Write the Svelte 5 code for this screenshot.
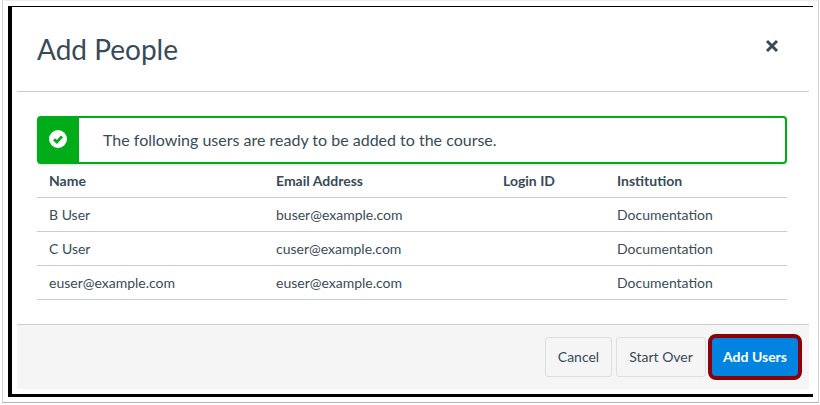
<script>
  const people = [
    { name: 'B User', email: 'buser@example.com', login: '', institution: 'Documentation' },
    { name: 'C User', email: 'cuser@example.com', login: '', institution: 'Documentation' },
    { name: 'euser@example.com', email: 'euser@example.com', login: '', institution: 'Documentation' }
  ];
</script>

<div class="shot">
  <div class="frame">
    <div class="modal">
      <header class="head">
        <h1>Add People</h1>
        <button class="close" aria-label="Close">
          <svg width="14" height="14" viewBox="0 0 14 14"><path d="M2 2 L12 12 M12 2 L2 12" stroke="#394b58" stroke-width="3" fill="none"/></svg>
        </button>
      </header>
      <div class="body">
        <div class="alert">
          <div class="alert-icon">
            <svg width="18" height="18" viewBox="0 0 18 18"><circle cx="9" cy="9" r="9" fill="#fff"/><path d="M5 9.2 L7.9 12 L13 6.4" stroke="#00ac18" stroke-width="2.8" fill="none"/></svg>
          </div>
          <p>The following users are ready to be added to the course.</p>
        </div>
        <table>
          <colgroup><col class="c1" /><col class="c2" /><col class="c3" /><col class="c4" /></colgroup>
          <thead>
            <tr><th>Name</th><th>Email Address</th><th>Login ID</th><th>Institution</th></tr>
          </thead>
          <tbody>
            {#each people as p}
              <tr><td>{p.name}</td><td>{p.email}</td><td>{p.login}</td><td>{p.institution}</td></tr>
            {/each}
          </tbody>
        </table>
      </div>
      <footer class="foot">
        <button class="btn cancel">Cancel</button>
        <button class="btn over">Start Over</button>
        <button class="btn primary">Add Users</button>
      </footer>
    </div>
  </div>
</div>

<style>
  :global(body) { margin: 0; background: #fff; }
  .shot {
    box-sizing: border-box;
    width: 817px;
    height: 403px;
    margin-left: 2px;
    padding: 6px 4px 6px 5px;
    background: #fff;
    border: 1px solid #cfcfcf;
    border-top-color: #efefef;
    border-bottom-color: #b5b5b5;
    font-family: Lato, "Liberation Sans", sans-serif;
    color: #394b58;
    overflow: hidden;
  }
  .frame {
    box-sizing: border-box;
    width: 805px;
    height: 391px;
    border-left: 4px solid #000;
    border-top: 1px solid #000;
    border-bottom: 3px solid #000;
    padding: 0 4px 5px 5px;
    margin-top: -1px;
  }
  .modal { display: flex; flex-direction: column; height: 100%; }
  .head {
    height: 84px;
    flex: none;
    border-bottom: 1px solid #c7cdd1;
    display: flex;
    align-items: center;
    justify-content: space-between;
    padding: 0 30px 0 20px;
    box-sizing: content-box;
  }
  h1 { margin: 0 0 1px; font-size: 28px; font-weight: 400; line-height: 1; color: #394b58; }
  .close { background: none; border: 0; padding: 0; display: flex; margin-top: -6px; }
  .body { flex: 1; padding: 24px 22px 0 20px; }
  .alert {
    box-sizing: border-box;
    height: 48px;
    display: flex;
    align-items: center;
    border: 2px solid #00ac18;
    border-radius: 4px;
    box-shadow: 0 1px 3px rgba(0,0,0,.15);
    background: #fff;
  }
  .alert-icon {
    width: 40px;
    align-self: stretch;
    background: #00ac18;
    display: flex;
    align-items: center;
    justify-content: center;
    margin-right: 24px;
    padding: 0 2px 2px 0;
    box-sizing: border-box;
    flex: none;
  }
  .alert p { margin: 0; font-size: 16px; line-height: 1; color: #394b58; }
  table { width: 750px; border-collapse: collapse; table-layout: fixed; font-size: 14px; }
  .c1, .c2 { width: 227px; }
  .c3 { width: 114px; }
  .c4 { width: 182px; }
  th, td { text-align: left; padding: 0 12px; border-bottom: 1px solid #c7cdd1; height: 33px; box-sizing: content-box; }
  th { font-weight: 700; }
  td { font-weight: 400; }
  .foot {
    flex: none;
    height: 64px;
    background: #f5f5f5;
    border-top: 1px solid #c7cdd1;
    display: flex;
    align-items: center;
    justify-content: flex-end;
    padding-right: 7px;
  }
  .btn {
    box-sizing: border-box;
    height: 40px;
    font: 400 14px Lato, "Liberation Sans", sans-serif;
    border-radius: 3px;
    border: 1px solid #dcdfe1;
    background: #f5f5f5;
    color: #394b58;
    padding: 0 0 2px;
  }
  .cancel { width: 67px; margin-right: 4px; }
  .over { width: 90px; margin-right: 2px; }
  .primary {
    width: 94px;
    height: 46px;
    border: 4px solid #8b0009;
    border-radius: 8px;
    background: #0084e0;
    color: #fff;
    font-weight: 700;
  }
</style>
